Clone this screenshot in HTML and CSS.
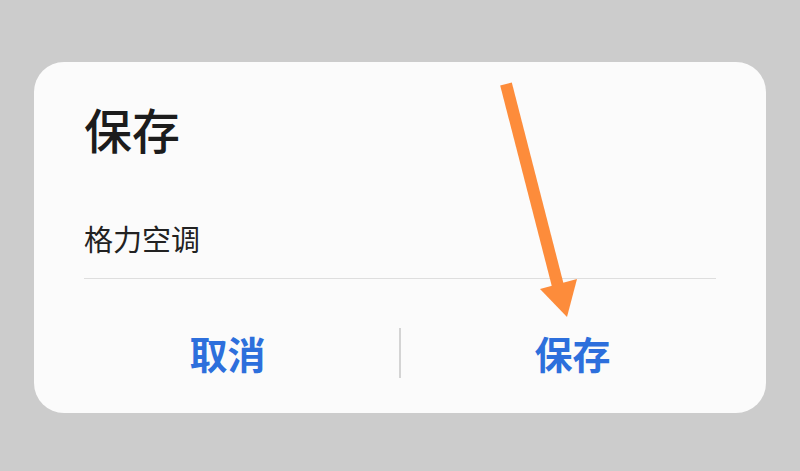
FILE: index.html
```html
<!DOCTYPE html>
<html lang="zh-CN">
<head>
<meta charset="utf-8">
<title>保存</title>
<link rel="stylesheet" href="styles.css">
</head>
<body>
<div class="dialog">
  <h1 class="title">保存</h1>
  <div class="field">格力空调</div>
  <div class="actions">
    <button class="btn">取消</button>
    <span class="sep"></span>
    <button class="btn">保存</button>
  </div>
</div>
<svg class="arrow" width="800" height="471" viewBox="0 0 800 471">
  <line x1="506" y1="84" x2="559" y2="290" stroke="#fd8c3b" stroke-width="12"/>
  <polygon points="540,289 577,279 567,317" fill="#fd8c3b"/>
</svg>
</body>
</html>
```
FILE: styles.css
```css
html, body {
  margin: 0;
  padding: 0;
}
body {
  background: #cccccc;
  width: 800px;
  height: 471px;
  overflow: hidden;
  position: relative;
  font-family: "Noto Sans CJK SC", "Noto Sans", sans-serif;
  padding-top: 62px;
  box-sizing: border-box;
}
.dialog {
  margin-left: 34px;
  width: 732px;
  height: 351px;
  background: #fbfbfb;
  border-radius: 30px;
  display: flex;
  flex-direction: column;
  box-sizing: border-box;
  padding: 42px 50px 0 50px;
}
.title {
  margin: 0;
  font-size: 48px;
  line-height: 48px;
  font-weight: 550;
  color: #1c1c1c;
}
.field {
  margin-top: 72px;
  font-size: 29px;
  line-height: 29px;
  color: #222222;
  padding-bottom: 25px;
  border-bottom: 1px solid #dedede;
}
.actions {
  margin: 24px -28px 0 -28px;
  height: 100px;
  display: flex;
  align-items: center;
}
.btn {
  flex: 1;
  background: none;
  border: none;
  padding: 0;
  font-family: inherit;
  font-size: 38px;
  line-height: 38px;
  font-weight: 600;
  color: #2d6fdc;
}
.sep {
  width: 2px;
  height: 50px;
  background: #d4d4d4;
}
.arrow {
  position: absolute;
  left: 0;
  top: 0;
}
```
